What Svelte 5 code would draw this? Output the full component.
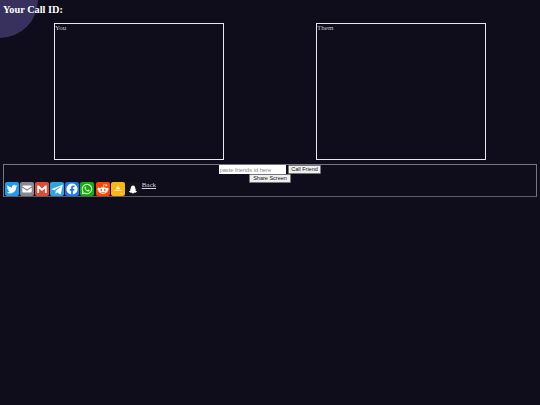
<script>
  // share buttons: background colour plus the glyph drawn inside a 24x24 box
  const shares = [
    { name: "Twitter", bg: "#1d9bf0", kind: "twitter" },
    { name: "Email", bg: "#888990", kind: "email" },
    { name: "Gmail", bg: "#dd4b39", kind: "gmail" },
    { name: "Telegram", bg: "#2ca5e0", kind: "telegram" },
    { name: "Facebook", bg: "#1877f2", kind: "facebook" },
    { name: "WhatsApp", bg: "#12af0a", kind: "whatsapp" },
    { name: "Reddit", bg: "#ff4500", kind: "reddit" },
    { name: "Sunrise", bg: "#fcb613", kind: "sunrise" },
    { name: "Snapchat", bg: "#14131c", kind: "snapchat" }
  ];
</script>

<div class="blob"></div>

<main>
  <h1>Your Call ID:</h1>

  <div class="videos">
    <div class="video">You</div>
    <div class="video">Them</div>
  </div>

  <section class="panel">
    <div class="controls">
      <div class="row">
        <input type="text" placeholder="paste friends id here" />
        <button>Call Friend</button>
      </div>
      <div class="row">
        <button>Share Screen</button>
      </div>
    </div>
    <div class="shares">
      {#each shares as s}
        <span class="icon" style="background: {s.bg}" title={s.name}>
          <svg viewBox="0 0 24 24" fill="#fff">
            {#if s.kind === "twitter"}
              <path d="M21 6.600c-.7.300-1.400.500-2.100.600.800-.500 1.300-1.200 1.600-2-.7.400-1.500.700-2.300.900a3.700 3.700 0 0 0-6.300 3.400C8.800 9.300 6.100 7.800 4.300 5.600c-1 1.700-.5 3.800 1.100 4.900-.6 0-1.200-.2-1.700-.5 0 1.800 1.300 3.300 3 3.700-.5.100-1.100.2-1.700.1.500 1.500 1.900 2.500 3.500 2.600A7.500 7.500 0 0 1 3 17.900a10.500 10.500 0 0 0 16.200-9.300c.7-.5 1.300-1.200 1.800-2z" />
            {:else if s.kind === "email"}
              <path d="M4 7.500C4 6.700 4.700 6 5.500 6h13c.8 0 1.500.7 1.500 1.500L12 12.500z" />
              <path d="M4 10l8 5 8-5v6.500c0 .8-.7 1.500-1.500 1.500h-13C4.700 18 4 17.300 4 16.500z" />
            {:else if s.kind === "gmail"}
              <path d="M4 19V6h2.500L12 11l5.500-5H20v13h-3v-8l-5 4.500L7 11v8z" />
            {:else if s.kind === "telegram"}
              <path d="M3 11.800 20.500 5c.8-.3 1.400.2 1.100 1.400l-3 13.700c-.2 1-.8 1.200-1.600.8l-4.500-3.300-2.200 2.100c-.3.300-.5.500-.9.500l.3-4.600 8.300-7.500c.4-.3-.1-.5-.6-.2L7.200 14.300 2.800 13c-1-.3-1-1 .2-1.200z" />
            {:else if s.kind === "facebook"}
              <path fill-rule="evenodd" d="M12 2.500a9.500 9.500 0 0 0-1.500 18.900v-6.600H8.100V12h2.400V9.900c0-2.400 1.400-3.700 3.600-3.700 1 0 2.100.2 2.100.2v2.300H15c-1.200 0-1.500.7-1.500 1.500V12h2.600l-.4 2.800h-2.200v6.600A9.500 9.500 0 0 0 12 2.500z" />
            {:else if s.kind === "whatsapp"}
              <path fill-rule="evenodd" d="M12 3a9 9 0 0 0-7.700 13.600L3 21l4.500-1.200A9 9 0 1 0 12 3zm0 1.700a7.300 7.300 0 1 1-3.900 13.500l-.3-.2-2.500.7.700-2.400-.2-.3A7.300 7.300 0 0 1 12 4.700z" />
              <path d="M9.300 7.800c-.2 0-.5 0-.8.300-.7.700-1 1.700-.5 3 .8 2 2.600 3.800 4.800 4.700 1.500.6 2.600.3 3.200-.5.300-.4.400-1 .3-1.300l-2-1c-.2 0-.3 0-.5.200l-.7.900c-.1.100-.3.200-.5.100-1.200-.5-2.200-1.400-2.900-2.600 0-.2 0-.3.100-.4l.5-.7c.1-.1.100-.3 0-.5l-.7-1.800c-.1-.3-.2-.4-.6-.4z" />
            {:else if s.kind === "reddit"}
              <path fill-rule="evenodd" d="M21.500 12a2.200 2.200 0 0 0-3.700-1.500 10 10 0 0 0-5-1.500l.9-3.800 2.600.6a1.600 1.600 0 1 0 .2-1l-3.200-.7c-.2 0-.4.100-.5.300L11.700 9a10 10 0 0 0-5.400 1.500A2.200 2.200 0 1 0 3.900 14v.6c0 3 3.600 5.400 8.100 5.400s8.100-2.400 8.100-5.400V14c.8-.4 1.400-1.100 1.400-2zM7.500 13.500a1.500 1.500 0 1 1 3 0 1.500 1.500 0 0 1-3 0zm8 4c-1 .8-2.300 1-3.500 1s-2.500-.2-3.500-1a.4.400 0 0 1 .5-.6c.8.600 2 .8 3 .8s2.200-.2 3-.8a.4.400 0 0 1 .5.600zm-.5-2.500a1.500 1.500 0 1 1 0-3 1.500 1.500 0 0 1 0 3z" />
            {:else if s.kind === "sunrise"}
              <path d="M8.500 12.500a3.500 3.500 0 0 1 7 0zM5 13.500h14v1.200H5zM11.400 6h1.200v3.500h-1.400zM16 19h3.500v1H16z" />
            {:else}
              <path d="M12 6c-2.400 0-3.800 1.700-3.800 4v1.800l-1.200-.2c-.5 0-.6.500-.2.800l1.300.8c-.4 1.400-1.300 2.400-2.700 2.900-.4.200-.3.700.1.900l1.500.4.300.9 1.600-.1c1 0 1.600 1.400 3.100 1.400s2.100-1.400 3.100-1.400l1.600.1.300-.9 1.500-.4c.4-.2.500-.7.100-.9-1.400-.5-2.300-1.500-2.700-2.900l1.300-.8c.4-.3.300-.8-.2-.8l-1.200.2V10c0-2.300-1.400-4-3.800-4z" />
            {/if}
          </svg>
        </span>
      {/each}
      <a href="#back">Back</a>
    </div>
  </section>
</main>

<style>
  :global(body) {
    margin: 0;
    background: #0f0d1c;
    color: #fff;
    font-family: "Liberation Serif", "Times New Roman", serif;
  }

  main {
    position: relative;
    padding: 3px 3px 0;
  }

  .blob {
    position: absolute;
    top: -38px;
    left: -38px;
    width: 76px;
    height: 76px;
    border-radius: 50%;
    background: #38305d;
  }

  h1 {
    margin: 0;
    font-size: 10.300px;
    line-height: 13px;
    font-weight: bold;
  }

  .videos {
    display: flex;
    justify-content: space-between;
    margin-top: 7px;
    padding: 0 51px;
  }

  .video {
    box-sizing: border-box;
    width: 170px;
    height: 137px;
    border: 1px solid #e8e8ec;
    font-size: 7px;
    line-height: 8px;
    color: #c8c8cc;
  }

  .panel {
    box-sizing: border-box;
    height: 33px;
    margin-top: 4px;
    border: 1px solid #77767f;
    border-bottom-color: #5f5e68;
  }

  .controls {
    display: flex;
    flex-direction: column;
    align-items: center;
  }

  .row {
    display: flex;
    gap: 2px;
    height: 9px;
  }

  input {
    box-sizing: border-box;
    width: 67px;
    height: 9px;
    border: 0;
    padding: 0 1px;
    background: #fff;
    font-family: "Liberation Sans", Arial, sans-serif;
    font-size: 5.700px;
  }

  input::placeholder {
    color: #8a8a8a;
  }

  button {
    box-sizing: border-box;
    height: 8.500px;
    border: 0.500px solid #777;
    border-radius: 1px;
    padding: 0 2.700px;
    background: #efefef;
    color: #111;
    font-family: "Liberation Sans", Arial, sans-serif;
    font-size: 5.500px;
    line-height: 7px;
  }

  .shares {
    display: flex;
    align-items: flex-start;
    gap: 1.200px;
    margin-top: -1.500px;
    padding-left: 0.500px;
  }

  .icon {
    display: block;
    width: 14px;
    height: 14px;
    border-radius: 2px;
  }

  .icon svg {
    display: block;
    width: 14px;
    height: 14px;
  }

  a {
    margin-top: -0.500px;
    margin-left: 0.500px;
    font-size: 7px;
    line-height: 9px;
    color: #d5d5dd;
  }
</style>
